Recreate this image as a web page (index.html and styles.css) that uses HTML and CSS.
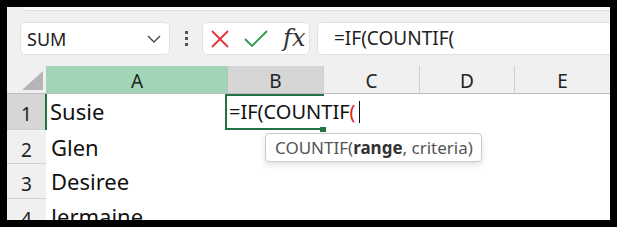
FILE: index.html
```html
<!DOCTYPE html>
<html>
<head>
<meta charset="utf-8">
<link rel="stylesheet" href="styles.css">
</head>
<body>
<div class="frame">
  <div class="ribbon-edge"></div>
  <div class="formula-row">
    <div class="namebox">
      <span class="name">SUM</span>
      <svg class="chev" width="14" height="8" viewBox="0 0 14 8"><path d="M1 1 L7 7 L13 1" fill="none" stroke="#444" stroke-width="1.4"/></svg>
    </div>
    <div class="dots"><i></i><i></i><i></i></div>
    <div class="fxbox">
      <svg width="18" height="18" viewBox="0 0 18 18"><path d="M1 1 L17 17 M17 1 L1 17" stroke="#e5333a" stroke-width="1.8" fill="none"/></svg>
      <svg width="24" height="18" viewBox="0 0 24 18"><path d="M1 9 L8 16 L23 1" stroke="#2f9a4f" stroke-width="1.8" fill="none"/></svg>
      <span class="fx">fx</span>
    </div>
    <div class="formula">=IF(COUNTIF(</div>
  </div>
  <div class="sheet">
    <div class="corner"><span class="tri"></span></div>
    <div class="colh sel">A</div>
    <div class="colh active">B</div>
    <div class="colh">C</div>
    <div class="colh">D</div>
    <div class="colh last">E</div>

    <div class="rowh cur">1</div>
    <div class="cell a1">Susie</div>
    <div class="cell"></div><div class="cell"></div><div class="cell"></div><div class="cell"></div>

    <div class="rowh">2</div>
    <div class="cell">Glen</div>
    <div class="cell"></div><div class="cell"></div><div class="cell"></div><div class="cell"></div>

    <div class="rowh">3</div>
    <div class="cell">Desiree</div>
    <div class="cell"></div><div class="cell"></div><div class="cell"></div><div class="cell"></div>

    <div class="rowh">4</div>
    <div class="cell">Jermaine</div>
    <div class="cell"></div><div class="cell"></div><div class="cell"></div><div class="cell"></div>

    <div class="editbox"><span>=IF(COUNTIF</span><span class="red">(</span><span class="caret"></span><span class="handle"></span></div>
    <div class="tip">COUNTIF(<b>range</b>, criteria)</div>
  </div>
</div>
</body>
</html>
```
FILE: styles.css
```css
html, body { margin: 0; padding: 0; }
body { background: #000; width: 617px; height: 227px; overflow: hidden; }
.frame {
  position: relative;
  margin: 7px 0 0 7px;
  width: 603px;
  height: 213px;
  background: #f0f0f0;
  overflow: hidden;
  font-family: "Noto Sans", "Open Sans", sans-serif;
  color: #222;
}
.ribbon-edge {
  height: 3px;
  margin-left: 16px;
  background: #fafafa;
  border-bottom-left-radius: 6px;
  box-shadow: 0 1px 1px rgba(0,0,0,0.08);
}
.formula-row {
  display: flex;
  align-items: center;
  height: 33px;
  margin-top: 12px;
  padding-left: 13px;
}
.namebox {
  box-sizing: border-box;
  width: 150px;
  height: 33px;
  background: #fff;
  border: 1px solid #e1e1e1;
  border-radius: 5px;
  display: flex;
  align-items: center;
  justify-content: space-between;
  padding: 0 8px 0 6px;
}
.name { font-size: 18px; color: #222; }
.dots {
  width: 32px;
  display: flex;
  flex-direction: column;
  align-items: center;
  gap: 3px;
}
.dots i { display: block; width: 3px; height: 3px; background: #555; }
.fxbox {
  box-sizing: border-box;
  width: 108px;
  height: 33px;
  background: #fff;
  border: 1px solid #e1e1e1;
  border-radius: 5px;
  display: flex;
  align-items: center;
  padding-left: 8px;
  gap: 15px;
}
.fx {
  font-family: "DejaVu Serif", "Liberation Serif", serif;
  font-style: italic;
  font-size: 24px;
  color: #333;
  line-height: 1;
  margin-top: -2px;
}
.formula {
  box-sizing: border-box;
  flex: 1;
  height: 33px;
  margin-left: 7px;
  background: #fff;
  border: 1px solid #e1e1e1;
  border-right: none;
  border-radius: 5px 0 0 5px;
  font-size: 19px;
  line-height: 31px;
  padding-left: 16px;
  color: #222;
}
.sheet {
  position: relative;
  margin-top: 11px;
  display: grid;
  grid-template-columns: 39px 181px 96px 96px 95px 1fr;
  grid-template-rows: 28px 36px 34px 35px 37px;
  background: #fff;
}
.corner {
  background: #f0f0f0;
  position: relative;
  border-bottom: 1px solid #bdbdbd;
}
.tri {
  position: absolute;
  right: 3px;
  bottom: 3px;
  width: 0; height: 0;
  border-left: 21px solid transparent;
  border-bottom: 19px solid #b5b5b5;
}
.colh {
  background: #f0f0f0;
  border-left: 1px solid #cfcfcf;
  border-bottom: 1px solid #bdbdbd;
  text-align: center;
  font-size: 19px;
  line-height: 30px;
  color: #222;
}
.colh.sel { background: #a0d6b5; border-left-color: #a0d6b5; }
.colh.active { background: #d6d6d6; border-left-color: #bdbdbd; }
.rowh {
  background: #f0f0f0;
  border-bottom: 1px solid #d1d1d1;
  text-align: center;
  font-size: 19px;
  line-height: 40px;
  color: #222;
}
.rowh.cur { background: #d6d6d6; }
.cell {
  font-size: 22px;
  line-height: 34px;
  padding-left: 5px;
  color: #111;
  white-space: nowrap;
}
.cell.a1 { border-left: 2px solid #217346; padding-left: 3px; margin-left: -1px; }
.editbox {
  position: absolute;
  left: 218px;
  top: 28px;
  height: 36px;
  box-sizing: border-box;
  border-left: 2px solid #217346;
  padding-left: 2px;
  font-size: 20px;
  line-height: 32px;
  color: #111;
  white-space: nowrap;
  display: flex;
  align-items: center;
}
.editbox::before {
  content: "";
  position: absolute;
  left: -2px;
  top: 0;
  width: 99px;
  height: 2px;
  background: #217346;
}
.editbox::after {
  content: "";
  position: absolute;
  left: -2px;
  bottom: 0;
  width: 95px;
  height: 2px;
  background: #217346;
}
.red { color: #d22; }
.caret { display: inline-block; width: 1px; height: 22px; background: #111; margin-left: 3px; }
.handle {
  position: absolute;
  left: 92px;
  bottom: -2px;
  width: 6px;
  height: 5px;
  background: #217346;
  border-left: 1px solid #fff;
}
.tip {
  position: absolute;
  left: 258px;
  top: 67px;
  height: 29px;
  box-sizing: border-box;
  padding: 0 8px 0 9px;
  background: #fff;
  border: 1px solid #cbcbcb;
  border-radius: 4px;
  box-shadow: 0 3px 6px rgba(0,0,0,0.12);
  font-size: 17px;
  line-height: 27px;
  color: #555;
  white-space: nowrap;
}
.tip b { color: #333; font-weight: 700; }
```
